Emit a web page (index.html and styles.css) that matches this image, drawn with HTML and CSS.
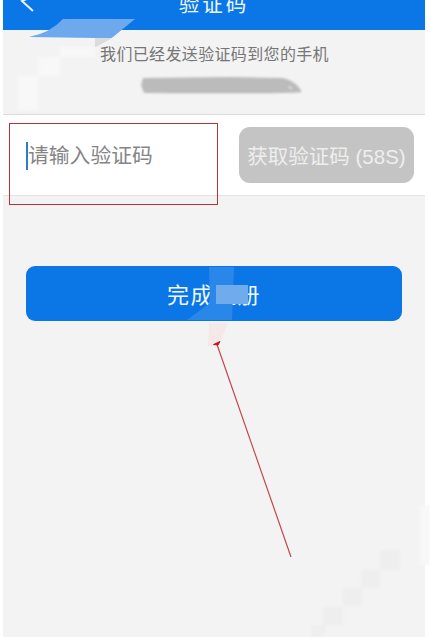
FILE: index.html
```html
<!DOCTYPE html>
<html lang="zh">
<head>
<meta charset="utf-8">
<title>验证码</title>
<link rel="stylesheet" href="styles.css">
</head>
<body>
<div class="screen">
  <header class="topbar">
    <svg class="back" width="16" height="14" viewBox="0 0 16 14"><path d="M11 -3 L2 1 L13 11" fill="none" stroke="#e8f2fd" stroke-width="2"/></svg>
    <h1 class="title">验证码</h1>
  </header>
  <section class="notice">
    <p class="notice-text">我们已经发送验证码到您的手机</p>
    <svg class="phone-mask" width="164" height="20" viewBox="0 0 164 20"><path d="M3 3 L90 2 L143 3 Q156 6 162 17 Q155 19 4 18 L1 10Z" fill="#bbbbbb"/><path d="M148 11 L153 13 L150 14Z" fill="#eeeeee"/></svg>
  </section>
  <section class="code-row">
    <div class="code-input"><span class="caret"></span><span class="placeholder">请输入验证码</span></div>
    <div class="code-btn">获取验证码 (58S)</div>
  </section>
  <div class="submit">完成注册</div>
</div>
<svg class="overlay" width="430" height="637" viewBox="0 0 430 637">
  <defs>
    <filter id="soft"><feGaussianBlur stdDeviation="0.7"/></filter>
    <filter id="softer"><feGaussianBlur stdDeviation="1.500"/></filter>
  </defs>
  <g filter="url(#soft)">
    <path d="M63 19 H135 L113 37 L95 47 V38 L29 37 Q50 33 63 19Z" fill="#6da9ec"/>
    <path d="M95 38 H112 L95 47Z" fill="#dcdcdc"/>
    <path d="M209 267 H234 L232 320 H187 L210 303Z" fill="#2b87ea"/>
    <rect x="216" y="285" width="32" height="19" fill="#6fabec"/>
    <path d="M209 323 H228 L222 338 L214 346 H208Z" fill="#f6e8e8"/>
  </g>
  <g filter="url(#softer)">
    <path d="M60 47 H95 V57 H38 V76 H18 V110 H38 V76 H60Z" fill="#f8f8f8"/>
    <rect x="380" y="550" width="20" height="20" fill="#eeeeee"/>
    <rect x="361" y="570" width="19" height="18" fill="#eeeeee"/>
    <rect x="343" y="588" width="19" height="18" fill="#eeeeee"/>
    <rect x="323" y="607" width="20" height="18" fill="#eeeeee"/>
    <rect x="311" y="625" width="15" height="12" fill="#efefef"/>
    <rect x="420" y="505" width="10" height="60" fill="#f8f8f8"/>
  </g>
  <rect x="9.5" y="123.500" width="208" height="81" fill="none" stroke="#b8323a"/>
  <path d="M291 557 L216.500 343" fill="none" stroke="#c2454f" stroke-width="1.200"/>
  <path d="M213.500 344.500 L220 341.500 L218 345Z" fill="#d00f1f" stroke="#d00f1f"/>
</svg>
</body>
</html>
```
FILE: styles.css
```css
* { box-sizing: border-box; }
html, body { margin: 0; height: 100%; background: #fff; }
body {
  position: relative;
  overflow: hidden;
  font-family: "Liberation Sans", "Noto Sans CJK SC", sans-serif;
}
.screen {
  margin: 0 5px 0 3px;
  height: 637px;
  background: #f3f3f3;
  display: flex;
  flex-direction: column;
}
.topbar {
  height: 30px;
  flex: none;
  background: #0b76e6;
  overflow: hidden;
  position: relative;
  display: flex;
  justify-content: center;
}
.back { position: absolute; left: 17px; top: 0; }
.title {
  margin: -7px 0 0;
  height: 24px;
  font-size: 20.500px;
  line-height: 24px;
  font-weight: 400;
  letter-spacing: 3px;
  color: #eef6fe;
}
.notice {
  height: 84px;
  flex: none;
  display: flex;
  flex-direction: column;
  align-items: center;
}
.notice-text {
  margin: 15px 0 0 1px;
  font-size: 16px;
  line-height: 20px;
  letter-spacing: 0.35px;
  color: #767676;
}
.phone-mask {
  margin: 10px 0 0 15px;
  filter: blur(0.8px);
}
.code-row {
  height: 82px;
  flex: none;
  background: #fff;
  border-top: 1px solid #dcdcdc;
  border-bottom: 1px solid #e2e2e2;
  display: flex;
  align-items: center;
  justify-content: space-between;
  padding: 2px 11px 0 23px;
}
.code-input { display: flex; align-items: center; }
.caret { width: 2px; height: 28px; background: #2f7cc4; }
.placeholder { font-size: 20.800px; line-height: 28px; color: #858585; }
.code-btn {
  width: 175px;
  height: 56px;
  margin-top: -2px;
  border-radius: 11px;
  background: #c4c4c4;
  color: #eeeeee;
  font-size: 20.500px;
  display: flex;
  align-items: center;
  justify-content: center;
  white-space: nowrap;
}
.submit {
  margin: 70px 23px 0;
  height: 55px;
  flex: none;
  border-radius: 9px;
  background: #0b76e6;
  color: #f2f8fe;
  font-size: 22px;
  display: flex;
  align-items: center;
  justify-content: center;
  letter-spacing: 1.500px;
  padding-bottom: 2px;
}
.overlay { position: absolute; left: 0; top: 0; pointer-events: none; }
```
